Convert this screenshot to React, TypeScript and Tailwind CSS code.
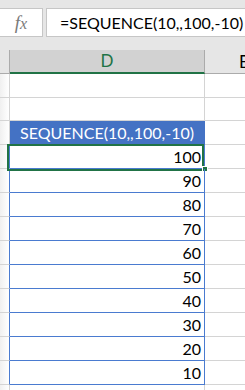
import React from "react";

const values = [100, 90, 80, 70, 60, 50, 40, 30, 20, 10];

type RowProps = {
  h: string;
  spill?: boolean;
  head?: boolean;
  selected?: boolean;
  text?: string;
};

function Row({ h, spill, head, selected, text }: RowProps) {
  const line = spill ? "border-[#4a7bd0]" : "border-[#d4d4d4]";
  return (
    <div className={`flex ${h}`}>
      <div className={`w-[10px] shrink-0 border-b border-r border-b-[#d4d4d4] ${spill && !head ? "border-r-[#4a7bd0]" : "border-r-[#d4d4d4]"} bg-gradient-to-r from-[#f0f0f0] to-white`} />
      <div
        className={`relative w-[195px] shrink-0 border-b border-r flex items-end pb-[3px] ${
          head
            ? "bg-[#4472c4] text-white justify-center border-[#4472c4]"
            : `justify-end pr-[3px] text-black ${line}`
        }`}
      >
        <span className="leading-none">{text}</span>
        {selected && (
          <>
            <div className="absolute left-[-3px] top-[-1px] w-[197px] h-[27px] border-2 border-[#217346]" />
            <div className="absolute left-[192px] top-[21px] w-[6px] h-[6px] bg-[#217346] border border-white" />
          </>
        )}
      </div>
      <div className="flex-1 border-b border-[#d4d4d4]" />
    </div>
  );
}

export default function App() {
  return (
    <div className="w-[245px] h-[390px] overflow-hidden bg-white font-['Lato',sans-serif] text-[16px]">
      <div className="h-[50px] bg-[#e6e6e6] pt-[8px] flex gap-[3px]">
        <div className="w-[43px] h-[29px] shrink-0 bg-white border border-l-0 border-[#c6c6c6] flex items-center justify-center">
          <span className="font-['Liberation_Serif',serif] italic text-[19px] text-[#7a7a7a] leading-none pb-[1px]">
            f<span className="text-[16px]">x</span>
          </span>
        </div>
        <div className="flex-1 h-[29px] bg-white border border-r-0 border-[#c6c6c6] flex items-center pl-[13px] whitespace-nowrap overflow-hidden">
          <span className="leading-none text-black">=SEQUENCE(10,,100,-10)</span>
        </div>
      </div>

      <div className="flex h-[24px]">
        <div className="w-[10px] shrink-0 bg-[#e6e6e6] border-r border-b border-[#ababab]" />
        <div className="w-[195px] shrink-0 bg-[#d2d2d2] border-r border-r-[#ababab] border-b-2 border-b-[#217346] flex items-center justify-center text-[#217346] text-[17px]">
          D
        </div>
        <div className="flex-1 bg-[#e6e6e6] border-b border-[#ababab] flex items-center pl-[34px] text-[17px] text-black whitespace-nowrap overflow-hidden">
          E
        </div>
      </div>

      <Row h="h-[24px]" />
      <Row h="h-[23px]" />
      <Row h="h-[24px]" spill head text="SEQUENCE(10,,100,-10)" />
      {values.map((v, i) => (
        <Row key={v} h="h-[24px]" spill selected={i === 0} text={String(v)} />
      ))}
      <Row h="h-[24px]" />
    </div>
  );
}
